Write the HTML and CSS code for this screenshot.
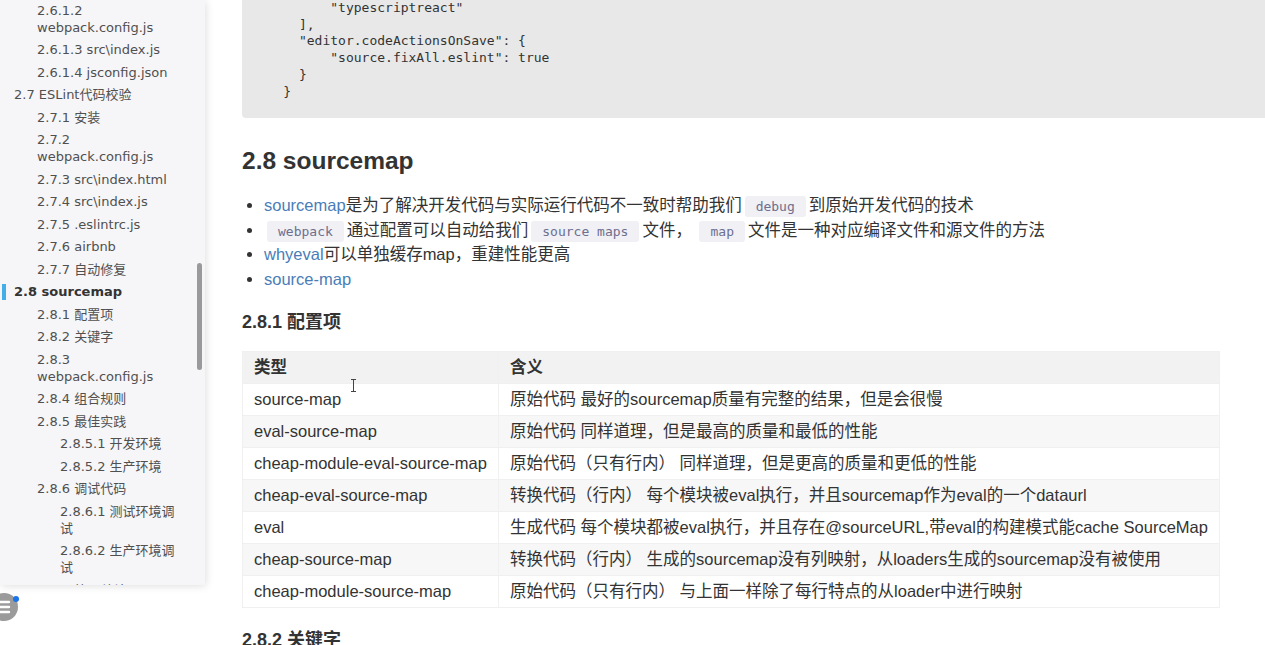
FILE: index.html
```html
<!DOCTYPE html>
<html lang="zh-CN">
<head>
<meta charset="utf-8">
<title>2.8 sourcemap</title>
<link rel="stylesheet" href="styles.css">
</head>
<body>
<div class="app">
  <aside class="outline">
    <ul class="toc">
      <li class="l3">2.6.1.2 webpack.config.js</li>
      <li class="l3">2.6.1.3 src\index.js</li>
      <li class="l3">2.6.1.4 jsconfig.json</li>
      <li class="l2">2.7 ESLint代码校验</li>
      <li class="l3">2.7.1 安装</li>
      <li class="l3">2.7.2 webpack.config.js</li>
      <li class="l3">2.7.3 src\index.html</li>
      <li class="l3">2.7.4 src\index.js</li>
      <li class="l3">2.7.5 .eslintrc.js</li>
      <li class="l3">2.7.6 airbnb</li>
      <li class="l3">2.7.7 自动修复</li>
      <li class="l2 active">2.8 sourcemap</li>
      <li class="l3">2.8.1 配置项</li>
      <li class="l3">2.8.2 关键字</li>
      <li class="l3">2.8.3 webpack.config.js</li>
      <li class="l3">2.8.4 组合规则</li>
      <li class="l3">2.8.5 最佳实践</li>
      <li class="l4">2.8.5.1 开发环境</li>
      <li class="l4">2.8.5.2 生产环境</li>
      <li class="l3">2.8.6 调试代码</li>
      <li class="l4">2.8.6.1 测试环境调试</li>
      <li class="l4">2.8.6.2 生产环境调试</li>
      <li class="l3">2.8.7 简要总结</li>
    </ul>
    <div class="scrollbar"></div>
  </aside>

  <main class="doc">
<pre class="code">          "typescriptreact"
      ],
      "editor.codeActionsOnSave": {
          "source.fixAll.eslint": true
      }
    }</pre>

    <h2 class="h2">2.8 sourcemap</h2>
    <ul class="bullets">
      <li><a class="link">sourcemap</a>是为了解决开发代码与实际运行代码不一致时帮助我们<code class="ic">debug</code>到原始开发代码的技术</li>
      <li><code class="ic">webpack</code>通过配置可以自动给我们<code class="ic">source maps</code>文件， <code class="ic">map</code>文件是一种对应编译文件和源文件的方法</li>
      <li><a class="link">whyeval</a>可以单独缓存map，重建性能更高</li>
      <li><a class="link">source-map</a></li>
    </ul>

    <h3 class="h3">2.8.1 配置项</h3>
    <div class="table-wrap">
      <table class="tbl">
        <thead>
          <tr><th class="c1">类型</th><th>含义</th></tr>
        </thead>
        <tbody>
          <tr><td>source-map</td><td>原始代码 最好的sourcemap质量有完整的结果，但是会很慢</td></tr>
          <tr><td>eval-source-map</td><td>原始代码 同样道理，但是最高的质量和最低的性能</td></tr>
          <tr><td>cheap-module-eval-source-map</td><td>原始代码（只有行内） 同样道理，但是更高的质量和更低的性能</td></tr>
          <tr><td>cheap-eval-source-map</td><td>转换代码（行内） 每个模块被eval执行，并且sourcemap作为eval的一个dataurl</td></tr>
          <tr><td>eval</td><td>生成代码 每个模块都被eval执行，并且存在@sourceURL,带eval的构建模式能cache SourceMap</td></tr>
          <tr><td>cheap-source-map</td><td>转换代码（行内） 生成的sourcemap没有列映射，从loaders生成的sourcemap没有被使用</td></tr>
          <tr><td>cheap-module-source-map</td><td>原始代码（只有行内） 与上面一样除了每行特点的从loader中进行映射</td></tr>
        </tbody>
      </table>
      <svg class="ibeam" width="7" height="13" viewBox="0 0 7 13"><path d="M1 0.5h5M3.5 0.5v12M1 12.5h5" stroke="#444" stroke-width="1" fill="none"/></svg>
    </div>

    <h3 class="h3 h3-next">2.8.2 关键字</h3>
  </main>
</div>

<div class="fab">
  <svg width="30" height="30" viewBox="0 0 30 30">
    <circle cx="15" cy="15" r="14" fill="#9b9b9b"/>
    <path d="M7 10h13M7 15h13M7 20h13" stroke="#fff" stroke-width="2.4" stroke-linecap="round"/>
  </svg>
  <span class="dot"></span>
</div>
</body>
</html>
```

FILE: styles.css
```css
html, body {
  margin: 0;
  padding: 0;
  background: #fff;
  overflow: hidden;
  height: 645px;
}

body {
  font-family: "Liberation Sans", "Noto Sans CJK SC", sans-serif;
  color: #333;
}

.app {
  display: flex;
  align-items: flex-start;
  gap: 37px;
}

/* ---------- outline sidebar ---------- */
.outline {
  position: relative;
  flex: 0 0 205px;
  height: 585px;
  overflow: hidden;
  background: #f6f6f8;
  box-shadow: 1px 1px 8px rgba(0, 0, 0, 0.13);
  font-family: "DejaVu Sans", "Noto Sans CJK SC", sans-serif;
  font-size: 13px;
  color: #505050;
}

.toc {
  list-style: none;
  margin: -1px 0 0;
  padding: 0 25px 0 0;
}

.toc li {
  position: relative;
  line-height: 17px;
  padding: 2.75px 0;
}

.toc .l2 { padding-left: 14px; }
.toc .l3 { padding-left: 37px; }
.toc .l4 { padding-left: 60px; }

.toc .active {
  font-weight: bold;
  color: #333;
}

.toc .active::before {
  content: "";
  position: absolute;
  left: 2px;
  top: 3px;
  width: 4px;
  height: 16px;
  background: #45aee8;
}

.scrollbar {
  position: absolute;
  left: 197px;
  top: 263px;
  width: 5px;
  height: 107px;
  border-radius: 3px;
  background: #9a9a9a;
}

/* ---------- document ---------- */
.doc {
  flex: 0 0 1060px;
}

.code {
  margin: 0;
  padding: 0 10px 18px;
  background: #e8e8e8;
  border-radius: 0 0 4px 4px;
  font-family: "DejaVu Sans Mono", monospace;
  font-size: 13px;
  line-height: 16.7px;
  color: #333;
}

.h2 {
  margin: 28px 0 0;
  font-size: 24.5px;
  line-height: 29px;
  font-weight: bold;
  color: #333;
}

.bullets {
  margin: 18px 0 0;
  padding-left: 22px;
  font-size: 16.5px;
  line-height: 24.5px;
}

.bullets li {
  height: 24.5px;
}

.link {
  color: #4a7db8;
  text-decoration: none;
}

.ic {
  font-family: "DejaVu Sans Mono", monospace;
  font-size: 13px;
  color: #6e6e8e;
  background: #f0f0f5;
  padding: 3px 11px;
  margin: 0 3px;
  border-radius: 3px;
}

.h3 {
  margin: 19.5px 0 0;
  font-size: 18px;
  line-height: 23px;
  font-weight: bold;
  color: #333;
}

.table-wrap {
  position: relative;
  margin-top: 17px;
}

.tbl {
  border-collapse: collapse;
  font-size: 16.5px;
  line-height: 20px;
}

.tbl th,
.tbl td {
  text-align: left;
  padding: 5.5px 11px;
  border: 1px solid #f0f0f0;
  white-space: nowrap;
}

.tbl th {
  font-weight: bold;
  background: #f2f2f2;
}

.tbl .c1 {
  width: 230px;
}

.tbl tbody tr:nth-child(even) td {
  background: #f7f7f7;
}

.ibeam {
  position: absolute;
  left: 108px;
  top: 28px;
}

.h3-next {
  margin-top: 21px;
}

/* ---------- floating button ---------- */
.fab {
  position: absolute;
  left: -11px;
  top: 592px;
  width: 30px;
  height: 30px;
}

.fab svg {
  display: block;
}

.dot {
  position: absolute;
  left: 24px;
  top: 4px;
  width: 6px;
  height: 6px;
  border-radius: 50%;
  background: #1a73e8;
}
```
